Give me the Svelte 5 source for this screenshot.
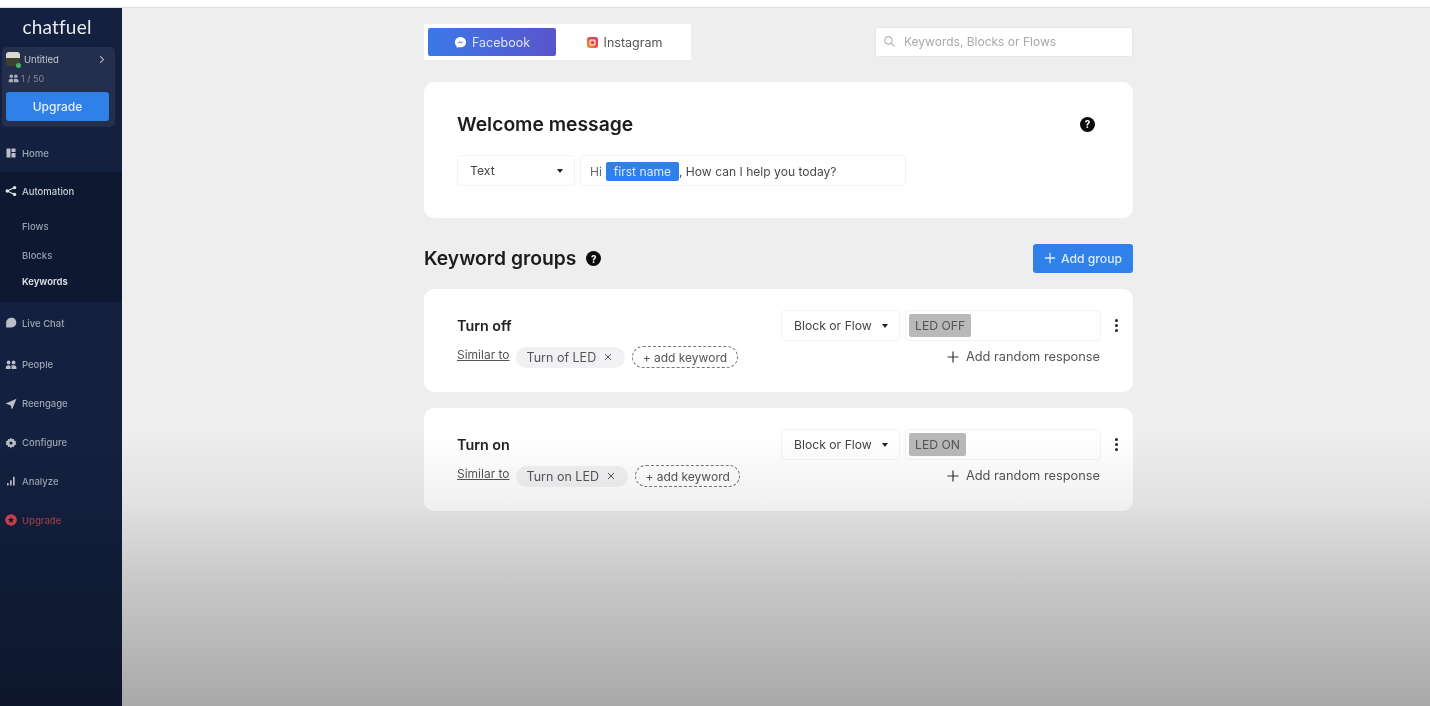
<script>
  const nav2 = [
    { label: 'Live Chat', icon: 'chat' },
    { label: 'People', icon: 'people' },
    { label: 'Reengage', icon: 'plane' },
    { label: 'Configure', icon: 'gear' },
    { label: 'Analyze', icon: 'bars' }
  ];
  const groups = [
    { name: 'Turn off', chip: 'Turn of LED', tag: 'LED OFF' },
    { name: 'Turn on', chip: 'Turn on LED', tag: 'LED ON' }
  ];
</script>

{#snippet icon(name)}
  <svg class="nav-icon" viewBox="0 0 12 12" aria-hidden="true">
    {#if name === 'home'}
      <path d="M1.500 1.500h4v9h-4zM6.500 1.500h4v3.500h-4zM6.500 6h4v4.500h-4z" fill="currentColor" />
    {:else if name === 'auto'}
      <circle cx="2.200" cy="6" r="1.700" fill="currentColor" /><circle cx="9.600" cy="2.600" r="1.700" fill="currentColor" /><circle cx="9.600" cy="9.400" r="1.700" fill="currentColor" />
      <path d="M2.200 6 9.600 2.600M2.200 6l7.400 3.400" stroke="currentColor" stroke-width="1.100" />
    {:else if name === 'chat'}
      <path d="M6.500 .8c2.900 0 4.800 2.100 4.800 4.800 0 2.800-2 4.900-4.800 4.900H1.200V5.600C1.200 3 3.400 .8 6.500 .8z" fill="currentColor" />
    {:else if name === 'people'}
      <circle cx="3.600" cy="3.500" r="1.900" fill="currentColor" /><circle cx="8.600" cy="3.500" r="1.900" fill="currentColor" />
      <path d="M.8 10V8.200c0-1 1.200-1.900 2.800-1.900s2 .9 2 1.900V10zM6.600 10V8.200c0-.8-.2-1.300-.5-1.700.7-.2 1.600-.2 2.500-.2 1.600 0 2.800.9 2.800 1.900V10z" fill="currentColor" />
    {:else if name === 'plane'}
      <path d="M11.500.8 .6 5.500l3.900 1.500 1 .1.200 1 1.400 3.300z" fill="currentColor" />
    {:else if name === 'gear'}
      <path d="M6 .6 7 2.300l1.900-.4.500 1.900 1.900.6-.7 1.600.7 1.600-1.900.6-.5 1.900L7 9.700 6 11.400 5 9.700l-1.900.4-.5-1.900-1.900-.6.7-1.600-.7-1.600 1.900-.6.500-1.900L5 2.300z" fill="currentColor" />
      <circle cx="6" cy="6" r="1.600" fill="#13203f" />
    {:else if name === 'bars'}
      <path d="M2 8h1.700v2.500H2zM5 5.300h1.700v5.200H5zM8 1.800h1.700v8.700H8z" fill="currentColor" />
    {/if}
  </svg>
{/snippet}

{#snippet help(size)}
  <span class="help" style="width:{size}px;height:{size}px;font-size:{size - 5}px">?</span>
{/snippet}

<div class="page">
  <div class="browser-strip"></div>
  <div class="shell">
    <aside class="sidebar">
      <div class="logo">chatfuel</div>
      <div class="account">
        <div class="acct-row">
          <span class="avatar"><span class="dot"></span></span>
          <span class="acct-name">Untitled</span>
          <svg class="chev" viewBox="0 0 8 12"><path d="M1.500 1.500 6 6l-4.500 4.500" fill="none" stroke="currentColor" stroke-width="1.500" /></svg>
        </div>
        <div class="acct-users">
          <svg class="users-icon" viewBox="0 0 12 12"><circle cx="3.600" cy="3.500" r="1.900" fill="currentColor" /><circle cx="8.600" cy="3.500" r="1.900" fill="currentColor" /><path d="M.8 10V8.200c0-1 1.200-1.900 2.800-1.900s2 .9 2 1.900V10zM6.600 10V8.200c0-.8-.2-1.300-.5-1.700.7-.2 1.600-.2 2.500-.2 1.600 0 2.800.9 2.800 1.900V10z" fill="currentColor" /></svg>
          <span>1 / 50</span>
        </div>
        <button class="upgrade-btn">Upgrade</button>
      </div>

      <div class="nav home">{@render icon('home')}<span>Home</span></div>

      <div class="auto-section">
        <div class="nav auto">{@render icon('auto')}<span>Automation</span></div>
        <div class="sub sub-flows">Flows</div>
        <div class="sub sub-blocks">Blocks</div>
        <div class="sub sub-on">Keywords</div>
      </div>

      <div class="nav-list">
        {#each nav2 as n}
          <div class="nav">{@render icon(n.icon)}<span>{n.label}</span></div>
        {/each}
        <div class="nav red">
          <svg class="nav-icon" viewBox="0 0 12 12"><circle cx="6" cy="6" r="5.800" fill="#d8454b" /><path d="m6 2.800 1 2.100 2.200.2-1.700 1.500.5 2.200L6 7.700 4 8.800l.5-2.200L2.800 5.100 5 4.900z" fill="#13203f" /></svg>
          <span>Upgrade</span>
        </div>
      </div>
    </aside>

    <main class="main">
      <div class="content">
        <div class="top-row">
          <div class="tabs">
            <div class="tab active">
              <svg class="tab-icon" viewBox="0 0 14 14"><path d="M7 1C3.600 1 1 3.400 1 6.700c0 1.700.7 3.200 1.900 4.200V13l2-1.100c.6.2 1.300.3 2.100.3 3.400 0 6-2.400 6-5.500S10.400 1 7 1z" fill="#fff" /><path d="m3.500 8.400 2.400-2.700 1.500 1.300 2.900-1.500-2.300 2.700-1.600-1.300z" fill="#4a68dc" /></svg>
              Facebook
            </div>
            <div class="tab insta">
              <svg class="tab-icon" viewBox="0 0 14 14"><defs><linearGradient id="ig" x1="0" y1="1" x2="1" y2="0"><stop offset="0" stop-color="#f5a623" /><stop offset=".55" stop-color="#ee4a3c" /><stop offset="1" stop-color="#d8366f" /></linearGradient></defs><rect x="1" y="1" width="12" height="12" rx="3" fill="url(#ig)" /><rect x="3.600" y="3.600" width="6.800" height="6.800" rx="2" fill="#f8d4c8" /><circle cx="7" cy="7" r="2" fill="#e5484d" /></svg>
              Instagram
            </div>
          </div>
          <div class="search">
            <svg class="search-icon" viewBox="0 0 14 14"><circle cx="5.800" cy="5.800" r="4" fill="none" stroke="currentColor" stroke-width="1.200" /><path d="m8.800 8.800 3.700 3.700" stroke="currentColor" stroke-width="1.200" /></svg>
            <span>Keywords, Blocks or Flows</span>
          </div>
        </div>

        <section class="card welcome">
          <div class="welcome-head">
            <h2>Welcome message</h2>
            {@render help(15)}
          </div>
          <div class="welcome-row">
            <div class="field select-text">Text<span class="caret"></span></div>
            <div class="field msg">
              <span class="hi">Hi</span><span class="attr">first name</span><span class="after">, How can I help you today?</span>
            </div>
          </div>
        </section>

        <div class="groups-head">
          <div class="groups-title"><h2>Keyword groups</h2>{@render help(15)}</div>
          <button class="add-group">
            <svg viewBox="0 0 12 12"><path d="M6 .8v10.400M.8 6h10.400" stroke="currentColor" stroke-width="1.300" /></svg>
            Add group
          </button>
        </div>

        {#each groups as g}
          <section class="card group">
            <div class="g-left">
              <h3>{g.name}</h3>
              <div class="g-keywords">
                <span class="similar">Similar to</span>
                <span class="chip">{g.chip}<svg viewBox="0 0 8 8"><path d="m1 1 6 6M7 1 1 7" stroke="currentColor" stroke-width="1" /></svg></span>
                <span class="add-kw">+ add keyword</span>
              </div>
            </div>
            <div class="g-right">
              <div class="g-controls">
                <div class="field select-flow">Block or Flow<span class="caret"></span></div>
                <div class="field target"><span class="tag">{g.tag}</span></div>
                <span class="more"><i></i><i></i><i></i></span>
              </div>
              <div class="random">
                <svg viewBox="0 0 12 12"><path d="M6 .5v11M.5 6h11" stroke="currentColor" stroke-width="1.200" /></svg>
                Add random response
              </div>
            </div>
          </section>
        {/each}
      </div>
    </main>
  </div>
  <div class="shade"></div>
</div>

<style>
  :global(body) { margin: 0; background: #eeeeee; }
  .page {
    position: relative;
    width: 1430px;
    height: 706px;
    overflow: hidden;
    font-family: Inter, "Liberation Sans", sans-serif;
    color: #222;
    display: flex;
    flex-direction: column;
    filter: blur(0.35px);
  }
  .browser-strip { height: 8px; flex: none; background: #fff; border-bottom: 1px solid #dedede; box-sizing: border-box; }
  .shell { flex: 1; display: flex; min-height: 0; }

  .sidebar {
    width: 122px;
    flex: none;
    background: #13203f;
    color: #a9afbd;
    display: flex;
    flex-direction: column;
  }
  .logo {
    height: 39px;
    box-sizing: border-box;
    padding: 8px 8px 0 0;
    text-align: center;
    color: #e9ebf0;
    font-family: Lato, "Open Sans", sans-serif;
    font-size: 19px;
    line-height: 22px;
    letter-spacing: .2px;
  }
  .account {
    margin: 0 7px 0 2px;
    height: 80px;
    box-sizing: border-box;
    padding: 5px 5px 0 4px;
    background: #232f4c;
    border-radius: 5px;
  }
  .acct-row { display: flex; align-items: center; height: 14px; font-size: 9.500px; color: #c3c7d1; }
  .avatar {
    position: relative;
    width: 14px;
    height: 14px;
    margin-right: 4px;
    border-radius: 3px;
    background: linear-gradient(#d9d9d3 0 40%, #3c4130 40% 100%);
  }
  .dot { position: absolute; right: -1px; bottom: -2px; width: 5px; height: 5px; border-radius: 50%; background: #3fb56a; }
  .acct-name { flex: 1; }
  .chev { width: 6px; height: 9px; margin-right: 5px; color: #aab0bd; }
  .acct-users { display: flex; align-items: center; height: 12px; margin-top: 6px; padding-left: 2px; font-size: 9px; color: #7f8797; gap: 2px; }
  .users-icon { width: 11px; height: 11px; color: #a9afbd; }
  .upgrade-btn {
    display: block;
    width: 103px;
    height: 29px;
    margin-top: 8px;
    border: 0;
    border-radius: 3px;
    background: #2f80e8;
    color: #e6effb;
    font: 500 12px/28px Inter, sans-serif;
    padding: 0;
  }
  .nav {
    display: flex;
    align-items: center;
    height: 16px;
    padding-left: 5px;
    font-size: 9.500px;
    font-weight: 500;
    color: #9ea5b4;
  }
  .nav-icon { width: 12px; height: 12px; margin-right: 5px; flex: none; color: #b9bec9; }
  .home { margin-top: 18px; margin-bottom: 11px; }
  .auto-section {
    height: 130px;
    background: #0e1830;
    padding-top: 11px;
    box-sizing: border-box;
  }
  .auto { color: #c9cdd6; }
  .auto .nav-icon { color: #e0e3e9; }
  .sub { padding-left: 22px; font-size: 9.500px; line-height: 14px; font-weight: 500; color: #979eae; }
  .sub-flows { margin-top: 21px; }
  .sub-blocks { margin-top: 15px; }
  .sub-on { margin-top: 12px; color: #dfe2e8; font-weight: 600; }
  .nav-list { display: flex; flex-direction: column; padding-top: 13px; gap: 22.800px; }
  .nav-list .nav:first-child { margin-bottom: 3.200px; }
  .red { color: #a5404a; }

  .main { flex: 1; min-width: 0; background: #eeeeee; }
  .content { width: 709px; margin-left: 302px; }
  .top-row { display: flex; justify-content: space-between; align-items: flex-start; padding-top: 16px; }
  .tabs { display: flex; background: #fff; padding: 4px 0 4px 4px; width: 263px; height: 28px; }
  .tab {
    width: 128px;
    height: 28px;
    display: flex;
    align-items: center;
    justify-content: center;
    gap: 5px;
    font-size: 12.500px;
    color: #555;
    border-radius: 2px;
  }
  .insta { padding-left: 8px; box-sizing: border-box; }
  .tab.active { background: linear-gradient(90deg, #3b79e8, #5a55cc); color: #dce4f8; }
  .tab-icon { width: 13px; height: 13px; }
  .search {
    margin-top: 3px;
    width: 258px;
    height: 30px;
    box-sizing: border-box;
    background: #fff;
    border: 1px solid #e6e6e6;
    border-radius: 3px;
    display: flex;
    align-items: center;
    padding: 0 0 1px 7px;
    gap: 8px;
    font-size: 12px;
    color: #a9a9a9;
  }
  .search-icon { width: 13px; height: 13px; color: #b4b4b4; }

  .card { background: #fff; border-radius: 10px; box-sizing: border-box; }
  .welcome { margin-top: 22px; height: 136px; padding: 30px 38px 0 33px; }
  .welcome-head { display: flex; justify-content: space-between; align-items: center; height: 24px; }
  h2 { margin: 0; font-size: 19.300px; line-height: 24px; font-weight: 600; color: #1c1c1c; }
  .help {
    display: inline-flex;
    align-items: center;
    justify-content: center;
    border-radius: 50%;
    background: #0c0c0c;
    color: #fff;
    font-weight: 700;
    line-height: 1;
    flex: none;
  }
  .welcome-row { display: flex; gap: 5px; margin-top: 19px; }
  .field {
    height: 31px;
    box-sizing: border-box;
    border: 1px solid #f3f3f3;
    border-radius: 4px;
    background: #fff;
    display: flex;
    align-items: center;
    font-size: 12.200px;
    color: #444;
  }
  .select-text { width: 118px; padding: 0 11px 0 12px; justify-content: space-between; }
  .caret { width: 0; height: 0; border-left: 3.500px solid transparent; border-right: 3.500px solid transparent; border-top: 4px solid #222; }
  .msg { width: 326px; padding: 1px 0 0 9px; white-space: pre; font-size: 12.100px; }
  .hi { color: #666; }
  .attr { margin-left: 4px; height: 19px; width: 73px; display: inline-flex; align-items: center; justify-content: center; background: #2f80e8; color: #dbe9fb; border-radius: 2px; }
  .after { color: #4a4a4a; }

  .groups-head { display: flex; justify-content: space-between; align-items: center; margin-top: 26px; height: 29px; }
  .groups-title { display: flex; align-items: center; gap: 10px; }
  .groups-title h2 { padding-bottom: 2px; }
  .add-group {
    width: 100px;
    height: 29px;
    padding: 0 0 1px;
    border: 0;
    border-radius: 3px;
    background: #2f80e8;
    color: #dbe9fb;
    font: 500 12.200px Inter, sans-serif;
    display: flex;
    align-items: center;
    justify-content: center;
    gap: 5px;
  }
  .add-group svg { width: 12px; height: 12px; }

  .group { height: 103px; margin-top: 16px; padding: 21px 0 0 33px; display: flex; justify-content: space-between; }
  .g-left h3 { margin: 6.500px 0 0; font-size: 14.300px; line-height: 18px; font-weight: 600; color: #222; }
  .g-keywords { display: flex; align-items: center; margin-top: 11.500px; height: 22px; }
  .similar { font-size: 12px; color: #555; text-decoration: underline; margin-right: 6px; position: relative; top: -3px; }
  .chip {
    height: 21px;
    box-sizing: border-box;
    padding: 0 13px 0 11px;
    background: #f1f1f4;
    border-radius: 11px;
    display: flex;
    align-items: center;
    gap: 8px;
    font-size: 12.500px;
    color: #555;
  }
  .chip svg { width: 8px; height: 8px; color: #555; }
  .add-kw {
    margin-left: 7px;
    height: 22px;
    box-sizing: border-box;
    padding: 0 9.500px;
    border: 1px dashed #777;
    border-radius: 11px;
    display: flex;
    align-items: center;
    font-size: 12px;
    color: #555;
  }
  .g-right { width: 352px; }
  .g-controls { display: flex; align-items: center; gap: 5px; }
  .select-flow { width: 119px; padding: 0 11px 0 12px; justify-content: space-between; }
  .target { width: 196px; padding-left: 3px; }
  .tag { height: 23px; padding: 0 6px; display: flex; align-items: center; background: #b9b9b9; color: #555; border-radius: 2px; font-size: 12.200px; }
  .more { display: flex; flex-direction: column; gap: 2px; margin-left: 9px; }
  .more i { width: 3px; height: 3px; border-radius: 50%; background: #222; }
  .random {
    width: 319px;
    margin-top: 7px;
    display: flex;
    align-items: center;
    justify-content: flex-end;
    gap: 7px;
    font-size: 12.800px;
    line-height: 18px;
    color: #555;
  }
  .random svg { width: 12px; height: 12px; color: #333; }

  .shade {
    position: absolute;
    left: 0;
    right: 0;
    bottom: 0;
    height: 276px;
    pointer-events: none;
    background: linear-gradient(rgba(0,0,0,0), rgba(0,0,0,.05) 25%, rgba(0,0,0,.16) 55%, rgba(0,0,0,.29));
  }
</style>
